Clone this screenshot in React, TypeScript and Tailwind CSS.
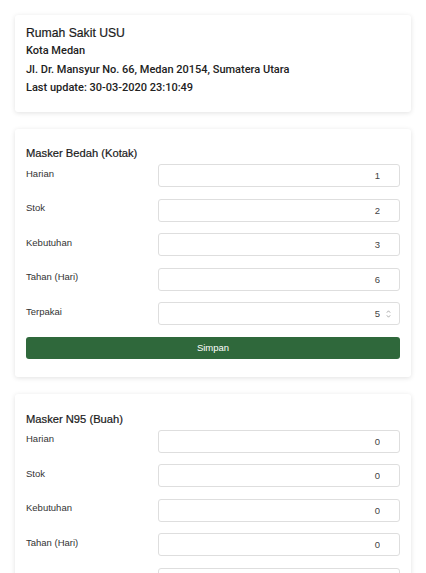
import React from "react";

type Field = { label: string; value: string; spin?: boolean };

const bedah: Field[] = [
  { label: "Harian", value: "1" },
  { label: "Stok", value: "2" },
  { label: "Kebutuhan", value: "3" },
  { label: "Tahan (Hari)", value: "6" },
  { label: "Terpakai", value: "5", spin: true },
];

const n95: Field[] = [
  { label: "Harian", value: "0" },
  { label: "Stok", value: "0" },
  { label: "Kebutuhan", value: "0" },
  { label: "Tahan (Hari)", value: "0" },
  { label: "Terpakai", value: "0" },
];

const medium = { fontFamily: 'Roboto, "Liberation Sans", sans-serif' };

function Spinner() {
  return (
    <svg className="absolute right-[9px] top-1/2 -translate-y-1/2" width="5" height="9" viewBox="0 0 5 9">
      <path d="M0.8 3.2 L2.5 1.3 L4.2 3.2" fill="none" stroke="#9a9a9a" strokeWidth="0.8" />
      <path d="M0.8 5.8 L2.5 7.7 L4.2 5.8" fill="none" stroke="#9a9a9a" strokeWidth="0.8" />
    </svg>
  );
}

function StockCard({ title, fields }: { title: string; fields: Field[] }) {
  return (
    <div className="bg-white rounded-[3px] shadow-[0_1px_5px_rgba(0,0,0,0.12)] px-[11px] pt-[16.5px] pb-[18px]">
      <h2 className="text-[11.2px] leading-[16px] text-[#1a1a1a] mb-[3px] [-webkit-text-stroke:0.2px_#1a1a1a]">
        {title}
      </h2>
      <div className="flex flex-col gap-[11.5px]">
        {fields.map((f, i) => (
          <div key={i} className="grid grid-cols-[132px_1fr]">
            <label className="text-[9.5px] leading-[14px] pt-[2.5px] text-[#333]">{f.label}</label>
            <div className="relative h-[23px]">
              <input
                readOnly
                value={f.value}
                className="block w-full h-[23px] border border-[#dedede] rounded-[3px] text-right pr-[19px] text-[9.5px] text-[#444] outline-none"
                style={{ fontFamily: "inherit" }}
              />
              {f.spin && <Spinner />}
            </div>
          </div>
        ))}
        <button className="block h-[22px] bg-[#2f683b] text-white text-[9.5px] rounded-[3px] mt-[0.5px]">
          Simpan
        </button>
      </div>
    </div>
  );
}

export default function App() {
  return (
    <div
      className="min-h-screen bg-white px-[15px] pt-[15px] pb-[15px] flex flex-col gap-[17px]"
      style={{ fontFamily: '"Liberation Sans", Arial, sans-serif' }}
    >
      {/* Header */}
      <div className="bg-white rounded-[3px] shadow-[0_1px_5px_rgba(0,0,0,0.12)] px-[11px] pt-[10px] pb-[14px]">
        <h1 className="text-[12.2px] leading-[17px] text-[#1a1a1a] [-webkit-text-stroke:0.2px_#1a1a1a]">
          Rumah Sakit USU
        </h1>
        <div className="text-[11px] leading-[18.5px] font-medium text-[#222]" style={medium}>
          <p>Kota Medan</p>
          <p>Jl. Dr. Mansyur No. 66, Medan 20154, Sumatera Utara</p>
          <p>Last update: 30-03-2020 23:10:49</p>
        </div>
      </div>

      <StockCard title="Masker Bedah (Kotak)" fields={bedah} />
      <StockCard title="Masker N95 (Buah)" fields={n95} />
    </div>
  );
}
